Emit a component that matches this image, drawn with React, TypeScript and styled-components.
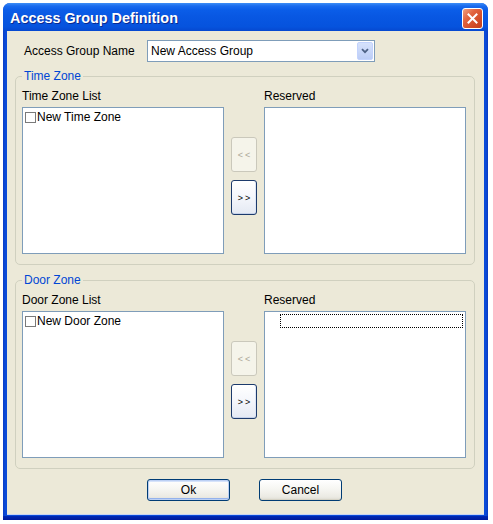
import React from 'react';
import styled, { createGlobalStyle } from 'styled-components';

const Global = createGlobalStyle`
  html, body { margin: 0; padding: 0; background: #ffffff; }
  body {
    font-family: "Liberation Sans", Arial, sans-serif;
    font-size: 12px;
    color: #000;
  }
  * { box-sizing: border-box; }
`;

const Window = styled.div`
  margin: 3px 0 0 3px;
  width: 485px;
  height: 517px;
  display: flex;
  flex-direction: column;
  border-radius: 7px 7px 0 0;
  overflow: hidden;
  background:
    linear-gradient(to top, #001a9c 0, #0029b4 4px, transparent 4px),
    linear-gradient(to right, #0a3cc4 0, #0a4ad8 2px, #0a4ad8 calc(100% - 2px), #0838c0 100%);
`;

const TitleBar = styled.div`
  height: 28px;
  flex: none;
  display: flex;
  align-items: center;
  justify-content: space-between;
  padding: 0 5px 0 7px;
  background: linear-gradient(
    #3d8ef6 0,
    #1a6bee 3px,
    #0b5de8 7px,
    #0857e2 50%,
    #0653dd 85%,
    #0648d0 100%
  );
`;

const Title = styled.span`
  padding-top: 2px;
  color: #fff;
  font-weight: bold;
  font-size: 14.4px;
  text-shadow: 1px 1px 0 #0a2a90;
`;

const CloseButton = styled.div`
  margin-top: 3px;
  width: 21px;
  height: 21px;
  border: 1px solid #ffffff;
  border-radius: 3px;
  background: linear-gradient(135deg, #f0a080 0%, #e2643f 35%, #d24c28 70%, #c0401f 100%);
  display: flex;
  align-items: center;
  justify-content: center;
`;

const Body = styled.div`
  flex: 1;
  margin: 0 4px 5px 4px;
  background: #ece9d8;
  padding: 9px 9px 0 8px;
  display: flex;
  flex-direction: column;
  border-bottom: 1px solid #c9d4f2;
`;

const NameRow = styled.div`
  display: flex;
  align-items: center;
  padding-left: 9px;
`;

const NameLabel = styled.span`
  width: 123px;
`;

const Combo = styled.div`
  width: 228px;
  height: 22px;
  border: 1px solid #7f9db9;
  background: #fff;
  display: flex;
  align-items: stretch;
`;

const ComboText = styled.span`
  flex: 1;
  padding-left: 3px;
  display: flex;
  align-items: center;
`;

const ComboArrow = styled.div`
  width: 16px;
  margin: 1px;
  border: 1px solid #c3d3fd;
  border-radius: 2px;
  background: linear-gradient(#d6e2fc, #bccdf6);
  display: flex;
  align-items: center;
  justify-content: center;
`;

const Group = styled.fieldset<{ $top: number }>`
  margin: ${(p) => p.$top}px 0 0 0;
  width: 460px;
  border: 1px solid #d0d0bf;
  border-radius: 5px;
  padding: 6px 8px 10px 6px;
  min-inline-size: 0;
`;

const Legend = styled.legend`
  color: #0046d5;
  padding: 0 2px;
  line-height: 14px;
  font-size: 12px;
`;

const TransferGrid = styled.div`
  display: grid;
  grid-template-columns: 202px 26px 202px;
  grid-template-rows: 14px 147px;
  column-gap: 7px;
  row-gap: 4px;
`;

const ListLabel = styled.span<{ $col: number }>`
  grid-column: ${(p) => p.$col};
  grid-row: 1;
  line-height: 14px;
`;

const ListBox = styled.div<{ $col: number }>`
  grid-column: ${(p) => p.$col};
  grid-row: 2;
  border: 1px solid #7f9db9;
  background: #fff;
  padding: 2px;
  position: relative;
`;

const Item = styled.div`
  display: flex;
  align-items: center;
  height: 14px;
  line-height: 14px;
`;

const CheckBox = styled.span`
  width: 11px;
  height: 11px;
  border: 1px solid #7a7a7a;
  background: #fff;
  margin-right: 1px;
  flex: none;
`;

const FocusRect = styled.div`
  margin-left: 13px;
  height: 14px;
  border: 1px dotted #000;
`;

const ButtonColumn = styled.div`
  grid-column: 2;
  grid-row: 2;
  padding-top: 30px;
  display: flex;
  flex-direction: column;
  gap: 8px;
`;

const MoveButton = styled.button<{ $disabled?: boolean }>`
  width: 26px;
  height: 35px;
  padding: 0;
  border-radius: 3px;
  font-family: "Liberation Sans", Arial, sans-serif;
  font-size: 9px;
  letter-spacing: 2px;
  text-indent: 2px;
  border: 1px solid ${(p) => (p.$disabled ? '#cac8bb' : '#1c3a6c')};
  color: ${(p) => (p.$disabled ? '#aca899' : '#000')};
  background: ${(p) =>
    p.$disabled
      ? '#f5f4ea'
      : 'linear-gradient(#ffffff 0%, #f4f6fb 50%, #e4e9f3 100%)'};
  box-shadow: ${(p) => (p.$disabled ? 'none' : 'inset 0 -1px 0 #c6d2ea, inset -1px 0 0 #dde5f4')};
`;

const Footer = styled.div`
  margin-top: 10px;
  display: flex;
  justify-content: center;
  gap: 29px;
  padding-right: 1px;
`;

const PushButton = styled.button<{ $default?: boolean }>`
  width: 83px;
  height: 22px;
  padding: 0;
  border: 1px solid #003c74;
  border-radius: 3px;
  font-family: "Liberation Sans", Arial, sans-serif;
  font-size: 12px;
  color: #000;
  background: linear-gradient(#ffffff 0%, #f6f6f2 45%, #ebeae3 85%, #dcdad0 100%);
  box-shadow: ${(p) =>
    p.$default
      ? 'inset 0 0 0 1px #bcd0f4, inset 0 -2px 0 #94b2ec, inset 0 2px 0 #d6e3fa'
      : 'inset 0 -1px 0 #d6d3c6'};
`;

type ZoneProps = {
  title: string;
  listLabel: string;
  item: string;
  top: number;
  focused?: boolean;
};

const Zone = ({ title, listLabel, item, top, focused }: ZoneProps) => (
  <Group $top={top}>
    <Legend>{title}</Legend>
    <TransferGrid>
      <ListLabel $col={1}>{listLabel}</ListLabel>
      <ListLabel $col={3}>Reserved</ListLabel>
      <ListBox $col={1}>
        <Item>
          <CheckBox />
          {item}
        </Item>
      </ListBox>
      <ButtonColumn>
        <MoveButton $disabled>&lt;&lt;</MoveButton>
        <MoveButton>&gt;&gt;</MoveButton>
      </ButtonColumn>
      <ListBox $col={3}>{focused && <FocusRect />}</ListBox>
    </TransferGrid>
  </Group>
);

export default function App() {
  return (
    <>
      <Global />
      <Window>
        <TitleBar>
          <Title>Access Group Definition</Title>
          <CloseButton>
            <svg width="11" height="11" viewBox="0 0 11 11">
              <path d="M1.5 1.5 L9.5 9.5 M9.5 1.5 L1.5 9.5" stroke="#fff" strokeWidth="2" strokeLinecap="square" />
            </svg>
          </CloseButton>
        </TitleBar>
        <Body>
          <NameRow>
            <NameLabel>Access Group Name</NameLabel>
            <Combo>
              <ComboText>New Access Group</ComboText>
              <ComboArrow>
                <svg width="8" height="6" viewBox="0 0 8 6">
                  <path d="M1 1.2 L4 4.2 L7 1.2" stroke="#4d6185" strokeWidth="1.8" fill="none" />
                </svg>
              </ComboArrow>
            </Combo>
          </NameRow>
          <Zone title="Time Zone" listLabel="Time Zone List" item="New Time Zone" top={7} />
          <Zone title="Door Zone" listLabel="Door Zone List" item="New Door Zone" top={8} focused />
          <Footer>
            <PushButton $default>Ok</PushButton>
            <PushButton>Cancel</PushButton>
          </Footer>
        </Body>
      </Window>
    </>
  );
}
